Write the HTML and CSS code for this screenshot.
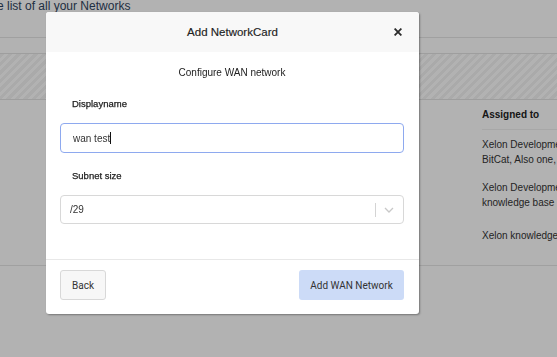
FILE: index.html
```html
<!DOCTYPE html>
<html>
<head>
<meta charset="utf-8">
<link rel="stylesheet" href="styles.css">
</head>
<body>
<div class="page">
  <p class="intro">The list of all your Networks</p>
  <div class="rule"></div>
  <div class="stripes"></div>
  <div class="table">
    <div class="thead"><span class="th">Assigned to</span></div>
    <div class="row">Xelon Development,<br>BitCat, Also one, Xelon</div>
    <div class="row">Xelon Development,<br>knowledge base</div>
    <div class="row single">Xelon knowledge base</div>
  </div>
</div>
<div class="overlay"></div>
<div class="modal">
  <div class="modal-header">
    <span class="title">Add NetworkCard</span>
    <svg class="close" width="8" height="8" viewBox="0 0 8 8"><path d="M1.2 1.2L6.8 6.8M6.8 1.2L1.2 6.8" stroke="#2b2b2b" stroke-width="1.8" stroke-linecap="square"/></svg>
  </div>
  <div class="modal-body">
    <div class="subtitle">Configure WAN network</div>
    <label class="label">Displayname</label>
    <div class="input focused">wan test<span class="caret"></span></div>
    <label class="label second">Subnet size</label>
    <div class="input select">
      <span class="value">/29</span>
      <span class="sep"></span>
      <svg class="chev" width="10" height="6" viewBox="0 0 10 6"><path d="M1 1L5 5L9 1" fill="none" stroke="#c8c8c8" stroke-width="1.3"/></svg>
    </div>
  </div>
  <div class="modal-footer">
    <button class="btn back">Back</button>
    <button class="btn primary">Add WAN Network</button>
  </div>
</div>
</body>
</html>
```
FILE: styles.css
```css
html, body {
  margin: 0;
  padding: 0;
  background: #ffffff;
  font-family: "Liberation Sans", Arial, sans-serif;
  overflow: hidden;
}
.page {
  width: 557px;
  height: 357px;
  overflow: hidden;
}
.intro {
  margin: 0;
  font-size: 12px;
  line-height: 12px;
  color: #2f4460;
  text-indent: -17px;
  height: 37px;
  white-space: nowrap;
}
.rule {
  height: 16px;
  border-top: 1px solid #e6e6e6;
  box-sizing: border-box;
}
.stripes {
  height: 47px;
  border-top: 1px solid #e2e2e2;
  border-bottom: 1px solid #e2e2e2;
  box-sizing: border-box;
  background: repeating-linear-gradient(135deg, #f4f4f4 0 3px, #ffffff 3px 6px);
}
.table {
  padding-left: 482px;
  font-size: 10px;
  color: #333;
  border-bottom: 1px solid #e6e6e6;
  height: 166px;
  box-sizing: border-box;
}
.thead {
  height: 30px;
  display: flex;
  align-items: center;
  border-bottom: 1px solid #f0f0f0;
  box-sizing: border-box;
  white-space: nowrap;
}
.th {
  font-weight: bold;
  color: #222;
}
.row {
  padding-top: 7px;
  line-height: 15px;
  height: 43px;
  box-sizing: border-box;
  white-space: nowrap;
}
.row.single {
  padding-top: 12px;
}
.overlay {
  position: fixed;
  inset: 0;
  background: rgba(0, 0, 0, 0.3);
}
.modal {
  position: absolute;
  left: 46px;
  top: 12px;
  width: 373px;
  height: 302px;
  background: #ffffff;
  border-radius: 3px;
  box-shadow: 1px 1px 2px rgba(0,0,0,0.35);
  display: flex;
  flex-direction: column;
  overflow: hidden;
}
.modal-header {
  height: 40px;
  background: #f8f8f8;
  display: flex;
  align-items: center;
  justify-content: center;
  position: relative;
  flex-shrink: 0;
}
.title {
  font-family: "Liberation Sans", Arial, sans-serif;
  font-size: 11.5px;
  color: #222;
  -webkit-text-stroke: 0.15px #222;
}
.close {
  position: absolute;
  left: 348px;
  top: 16px;
}
.modal-body {
  flex: 1;
  padding: 14px 15px 0 14px;
  display: flex;
  flex-direction: column;
}
.subtitle {
  text-align: center;
  font-size: 10px;
  line-height: 14px;
  color: #222;
}
.label {
  margin: 17px 0 0 12px;
  font-size: 9.5px;
  line-height: 14px;
  color: #222;
  -webkit-text-stroke: 0.25px #222;
}
.label.second {
  margin-top: 16px;
}
.input {
  margin-top: 12px;
  height: 30px;
  box-sizing: border-box;
  border: 1px solid #d8d8d8;
  border-radius: 4px;
  display: flex;
  align-items: center;
  padding-left: 12px;
  font-size: 10px;
  color: #333;
}
.input.focused {
  border-color: #8ea9ef;
}
.caret {
  display: inline-block;
  width: 1px;
  height: 12px;
  background: #111;
}
.input.select {
  height: 29px;
  padding-left: 9px;
}
.value {
  flex: 1;
}
.sep {
  width: 1px;
  height: 14px;
  background: #d4d4d4;
}
.chev {
  margin: 0 9px 0 8px;
}
.modal-footer {
  height: 55px;
  flex-shrink: 0;
  border-top: 1px solid #e8e8e8;
  box-sizing: border-box;
  padding: 10px 15px 0 14px;
  display: flex;
  justify-content: space-between;
  align-items: flex-start;
}
.btn {
  height: 30px;
  font-family: Roboto, "Liberation Sans", sans-serif;
  font-size: 10px;
  color: #333;
  border-radius: 3px;
  cursor: pointer;
}
.back {
  width: 46px;
  background: #f7f7f7;
  border: 1px solid #d8d8d8;
}
.primary {
  width: 105px;
  background: #ccdbf7;
  border: none;
}
```
